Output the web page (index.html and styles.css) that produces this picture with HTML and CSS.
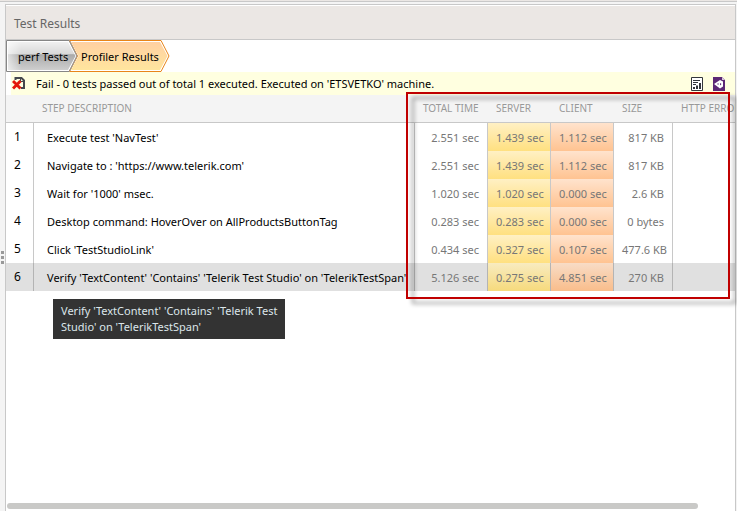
FILE: index.html
```html
<!DOCTYPE html>
<html lang="en">
<head>
<meta charset="utf-8">
<title>Test Results</title>
<link rel="stylesheet" href="styles.css">
</head>
<body>
<div class="app">
  <div class="topbar"></div>
  <div class="workspace">
    <div class="splitter"><i></i><i></i><i></i></div>
    <main class="panel">
      <h1 class="panel-title">Test Results</h1>
      <nav class="crumbs">
        <button class="crumb crumb-root" type="button">
          <svg width="72" height="32" viewBox="0 0 72 32" aria-hidden="true">
            <defs><linearGradient id="silver" x1="0" y1="0" x2="0" y2="1"><stop offset="0" stop-color="#f0f0f0"/><stop offset=".43" stop-color="#d8d8d8"/><stop offset=".45" stop-color="#aaa"/><stop offset="1" stop-color="#cecece"/></linearGradient>
            <linearGradient id="sheen"><stop offset="0" stop-color="#fff" stop-opacity=".6"/><stop offset=".2" stop-color="#fff" stop-opacity="0"/></linearGradient></defs>
            <path d="M.5.5H63L71 16 63 31.500H.5z" fill="#fff" stroke="#868686"/>
            <path d="M2 2H62L69.500 16 62 30H2z" fill="url(#silver)"/>
            <path d="M2 2H62L69.500 16 62 30H2z" fill="url(#sheen)"/>
          </svg>
          <span>perf Tests</span>
        </button>
        <button class="crumb crumb-current" type="button">
          <svg width="101" height="32" viewBox="0 0 101 32" aria-hidden="true">
            <defs><linearGradient id="amber" x1="0" y1="0" x2="0" y2="1"><stop offset="0" stop-color="#ffd0a2"/><stop offset="1" stop-color="#ffe59e"/></linearGradient></defs>
            <path d="M.5.5H92L100 16 92 31.500H.5L8.500 16z" fill="#fff" stroke="#e8851a"/>
            <path d="M2 2H91L98.500 16 91 30H2L9.500 16z" fill="url(#amber)"/>
            <path d="M.5.5L8 16 .5 31.500" fill="none" stroke="#999"/>
          </svg>
          <span>Profiler Results</span>
        </button>
      </nav>
      <div class="status">
        <svg class="fail" width="14" height="15" viewBox="0 0 14 15" aria-hidden="true">
          <path d="M3.500 4V2H9.500L12 4.500V12H9" fill="none" stroke="#45484d" stroke-width="2"/>
          <path d="M8.500 2V5.500H12" fill="none" stroke="#45484d"/>
          <path d="M1 5L8.500 12.500M8.500 5L1 12.500" stroke="#e3170a" stroke-width="3"/>
        </svg>
        <p>Fail - 0 tests passed out of total 1 executed. Executed on 'ETSVETKO' machine.</p>
        <button class="tool" type="button" aria-label="Report">
          <svg width="12" height="14" viewBox="0 0 12 14"><path d="M.5.5H11.500V13.500H.5z" fill="#fff" stroke="#33363b"/><path d="M2 3.500H9M2 5.500H7M2 7.500H5" stroke="#33363b"/><path d="M3 12V10M6 12V8.500M9 12V6" stroke="#33363b" stroke-width="2"/></svg>
        </button>
        <button class="tool" type="button" aria-label="Open in Visual Studio">
          <svg width="12" height="14" viewBox="0 0 12 14"><path d="M0 0H9L12 3V14H0z" fill="#5c2775"/><path d="M9 0V3H12z" fill="#d8c7de"/><path d="M1 7L7 3L10 4.500V9.500L7 11.500z" fill="#fff"/><path d="M4 7L5.500 6V8zM7 6L8.500 7 7 8.500z" fill="#5c2775"/></svg>
        </button>
      </div>
      <div class="results">
        <table>
          <colgroup><col class="c-num"><col><col class="c-total"><col class="c-time"><col class="c-time"><col class="c-size"><col class="c-http"></colgroup>
          <thead><tr><th></th><th>STEP DESCRIPTION</th><th>TOTAL TIME</th><th>SERVER</th><th>CLIENT</th><th>SIZE</th><th>HTTP ERRORS</th></tr></thead>
          <tbody>
            <tr><td>1</td><td>Execute test 'NavTest'</td><td>2.551 sec</td><td class="server">1.439 sec</td><td class="client">1.112 sec</td><td>817 KB</td><td></td></tr>
            <tr><td>2</td><td>Navigate to : 'https://www.telerik.com'</td><td>2.551 sec</td><td class="server">1.439 sec</td><td class="client">1.112 sec</td><td>817 KB</td><td></td></tr>
            <tr><td>3</td><td>Wait for '1000' msec.</td><td>1.020 sec</td><td class="server">1.020 sec</td><td class="client">0.000 sec</td><td>2.6 KB</td><td></td></tr>
            <tr><td>4</td><td>Desktop command: HoverOver on AllProductsButtonTag</td><td>0.283 sec</td><td class="server">0.283 sec</td><td class="client">0.000 sec</td><td>0 bytes</td><td></td></tr>
            <tr><td>5</td><td>Click 'TestStudioLink'</td><td>0.434 sec</td><td class="server">0.327 sec</td><td class="client">0.107 sec</td><td>477.6 KB</td><td></td></tr>
            <tr class="selected"><td>6</td><td>Verify 'TextContent' 'Contains' 'Telerik Test Studio' on 'TelerikTestSpan'</td><td>5.126 sec</td><td class="server">0.275 sec</td><td class="client">4.851 sec</td><td>270 KB</td><td></td></tr>
          </tbody>
        </table>
        <div class="highlight"></div>
        <div class="tooltip" role="tooltip">Verify 'TextContent' 'Contains' 'Telerik Test Studio' on 'TelerikTestSpan'</div>
      </div>
      <div class="scroll"><div class="thumb"></div></div>
    </main>
  </div>
</div>
</body>
</html>
```
FILE: styles.css
```css
* { box-sizing: border-box; }
body {
  margin: 0;
  background: #f4f4f4;
  color: #000;
  font: 11px/16px "Noto Sans", "Open Sans", sans-serif;
}
button { font: inherit; color: inherit; border: 0; padding: 0; background: none; }
svg { display: block; }
.app { display: flex; flex-direction: column; height: 100vh; overflow: hidden; }
.topbar { height: 2px; background: #ebe7e4; border-bottom: 1px solid #c8c8c8; }
.workspace { flex: 1; display: flex; min-height: 0; padding: 2px 1px 0 0; }
.splitter { width: 5px; display: flex; flex-direction: column; justify-content: center; gap: 2px; }
.splitter i { width: 3px; height: 3px; margin-left: 1px; background: #999; }
.panel {
  flex: 1;
  min-width: 0;
  display: flex;
  flex-direction: column;
  background: #fff;
  border: 1px solid #c8c8c8;
  border-bottom: 0;
}
.panel-title {
  margin: 1px 0 0;
  padding: 9px 8px 7px;
  background: #ebe7e4;
  border-bottom: 1px solid #c8c8c8;
  color: #666;
  font-size: 12px;
  line-height: 17px;
  font-weight: 400;
}
.crumbs { display: flex; padding-right: 1px; }
.crumb { display: grid; align-items: center; text-align: left; }
.crumb > * { grid-area: 1 / 1; }
.crumb span { padding: 2px 0 0 12px; }
.crumb-root { width: 63px; z-index: 0; }
.crumb-current { z-index: 1; }
.status {
  display: flex;
  align-items: center;
  gap: 10px;
  height: 23px;
  margin-left: 5px;
  padding-right: 10px;
  background: #ffffe0;
}
.fail { margin-left: 1px; }
.status p { flex: 1; margin: 0; white-space: nowrap; }
.results { position: relative; }
table { width: 100%; table-layout: fixed; border-collapse: separate; border-spacing: 0; }
.c-num { width: 28px; }
.c-total { width: 73px; }
.c-time { width: 63px; }
.c-size { width: 59px; }
.c-http { width: 62px; }
th, td { height: 28px; padding: 2px 8px 0; text-align: right; white-space: nowrap; overflow: hidden; }
th {
  padding: 0 8px 1px;
  background: #f4f4f4;
  border-bottom: 1px solid #c8c8c8;
  color: #999;
  font-size: 10px;
  font-weight: 400;
  text-align: left;
}
td { border-right: 1px solid #c8c8c8; color: #777; }
td:last-child { border-right: 0; }
td:first-child { padding: 0 8px; color: #000; font-size: 12px; text-align: left; }
td:nth-child(2) { padding-left: 13px; padding-right: 0; color: #000; text-align: left; }
.server { background: linear-gradient(#fff0c4, #ffe080); }
.client { background: linear-gradient(#ffe3cd, #ffc391); }
.selected td { background-color: #e0e0e0; border-color: #b4b4b4; }
.selected .server { background: linear-gradient(#f8ebc0, #f6da7c); }
.selected .client { background: linear-gradient(#f8dcc6, #f9bd8b); }
.highlight {
  position: absolute;
  top: -3px;
  right: 5px;
  width: 324px;
  height: 207px;
  border: 2px solid #c00000;
  filter: drop-shadow(6px 5px 2px rgba(0, 0, 0, 0.4));
}
.tooltip {
  position: absolute;
  top: 204px;
  left: 47px;
  width: 232px;
  padding: 4px 4px 4px 8px;
  background: #333;
  color: #dce6ea;
}
.scroll { margin-top: auto; padding: 0 37px 2px 1px; }
.thumb { height: 6px; border-radius: 3px; background: #c9c9c7; }
```
